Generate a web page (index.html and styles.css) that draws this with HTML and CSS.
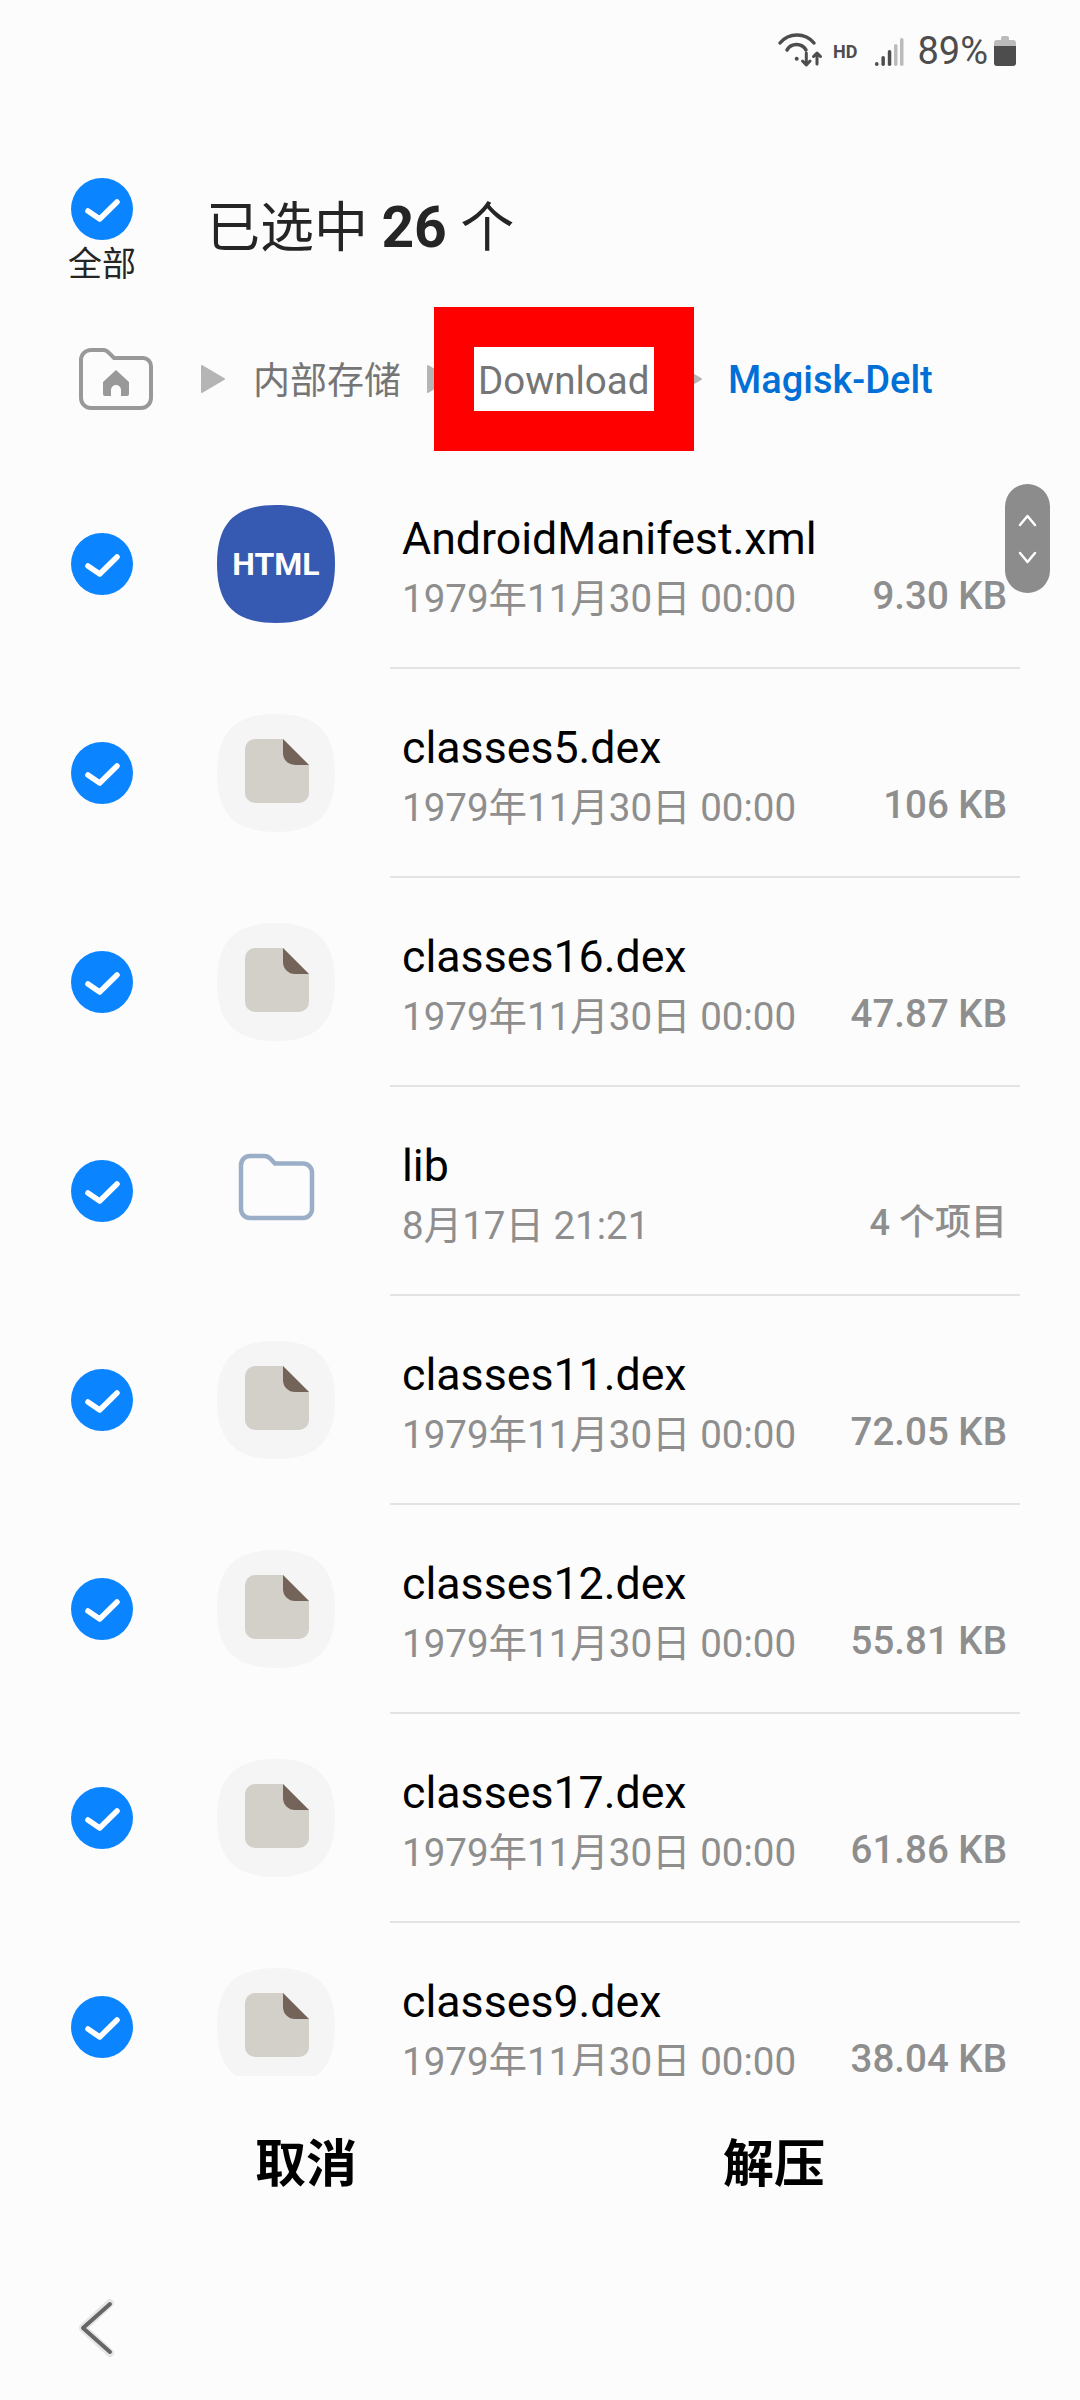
FILE: index.html
```html
<!DOCTYPE html>
<html lang="zh-CN">
<head>
  <meta charset="UTF-8">
  <title>已选中 26 个</title>
  <link rel="stylesheet" href="styles.css">
</head>
<body>
  <svg class="defs" width="0" height="0">
    <symbol id="check" viewBox="0 0 62 62">
      <circle cx="31" cy="31" r="31" fill="#0a84ff"/>
      <path d="M17 33 L28.7 41 L46 24" fill="none" stroke="#fff" stroke-width="5.5" stroke-linecap="round" stroke-linejoin="round"/>
    </symbol>
    <symbol id="doc" viewBox="0 0 118 118">
      <path d="M59 0C100 0 118 18 118 59C118 100 100 118 59 118C18 118 0 100 0 59C0 18 18 0 59 0Z" fill="#f5f5f5"/>
      <path d="M38 25H66L92 51V79a10 10 0 0 1-10 10H38a10 10 0 0 1-10-10V35a10 10 0 0 1 10-10Z" fill="#d3cfc9"/>
      <path d="M66 25L92 51H78a12 12 0 0 1-12-12Z" fill="#736359"/>
    </symbol>
  </svg>

  <div class="screen">
    <div class="status">
      <svg class="wifi" viewBox="0 0 46 36" width="46" height="36">
        <g fill="none" stroke="#4d4d4d" stroke-width="3.5" stroke-linecap="round" stroke-linejoin="round">
          <path d="M3 10A22 22 0 0 1 37 10"/>
          <path d="M10 17A11 11 0 0 1 29 17"/>
        </g>
        <g fill="none" stroke="#4d4d4d" stroke-width="3" stroke-linecap="round" stroke-linejoin="round">
          <path d="M29.300 20V32M25.500 28L29.300 32L33 28"/>
          <path d="M40 20V31M36.500 23.500L40 20L43.500 23.500"/>
        </g>
        <circle cx="19.700" cy="25.700" r="2" fill="#4d4d4d"/>
      </svg>
      <span class="hd">HD</span>
      <svg class="signal" viewBox="0 0 30 30" width="30" height="30">
        <rect x="0" y="25" width="3.5" height="4" rx="1.7" fill="#4d4d4d"/>
        <rect x="6.4" y="19" width="3.5" height="10" rx="1.7" fill="#4d4d4d"/>
        <rect x="12.8" y="13" width="3.5" height="16" rx="1.7" fill="#4d4d4d"/>
        <rect x="19" y="7" width="3.5" height="22" rx="1.7" fill="#bbb"/>
        <rect x="25" y="1" width="3.5" height="28" rx="1.7" fill="#bbb"/>
      </svg>
      <span class="battery-text">89%</span>
      <svg class="battery" viewBox="0 0 22 32" width="22" height="32">
        <path d="M7 3a2 2 0 0 1 2-2h4a2 2 0 0 1 2 2v2h4a3 3 0 0 1 3 3v4H0V8a3 3 0 0 1 3-3h4Z" fill="#bbb"/>
        <path d="M0 11H22V28a3 3 0 0 1-3 3H3a3 3 0 0 1-3-3Z" fill="#4d4d4d"/>
      </svg>
    </div>

    <div class="header">
      <div class="select-all">
        <svg class="check"><use href="#check"/></svg>
        <span>全部</span>
      </div>
      <h1 class="title">已选中 <b>26</b> 个</h1>
    </div>

    <div class="crumbs">
      <svg class="home" viewBox="0 0 74 62" width="74" height="62">
        <path d="M12 2H24a8 8 0 0 1 6 3L35 10H64a8 8 0 0 1 8 8V50a10 10 0 0 1-10 10H12A10 10 0 0 1 2 50V12A10 10 0 0 1 12 2Z" fill="none" stroke="#999" stroke-width="4"/>
        <path d="M37 22L50 34V46a2 2 0 0 1-2 2H42V42a5 5 0 0 0-10 0V48H26a2 2 0 0 1-2-2V34Z" fill="#999"/>
      </svg>
      <svg class="arrow" viewBox="0 0 24 30" width="24" height="30"><path d="M1 2L23 15L1 28Z" fill="#b5b5b5" stroke="#b5b5b5" stroke-width="2" stroke-linejoin="round"/></svg>
      <span class="crumb">内部存储</span>
      <svg class="arrow" viewBox="0 0 24 30" width="24" height="30"><path d="M1 2L23 15L1 28Z" fill="#b5b5b5" stroke="#b5b5b5" stroke-width="2" stroke-linejoin="round"/></svg>
      <span class="crumb marked">Download</span>
      <svg class="arrow" viewBox="0 0 24 30" width="24" height="30"><path d="M1 2L23 15L1 28Z" fill="#b5b5b5" stroke="#b5b5b5" stroke-width="2" stroke-linejoin="round"/></svg>
      <span class="crumb current">Magisk-Delta</span>
    </div>

    <div class="list">
      <div class="row">
        <svg class="check"><use href="#check"/></svg>
        <div class="icon icon-html">
          <svg viewBox="0 0 118 118" width="118" height="118"><path d="M59 0C100 0 118 18 118 59C118 100 100 118 59 118C18 118 0 100 0 59C0 18 18 0 59 0Z" fill="#3659b2"/></svg>
          <span>HTML</span>
        </div>
        <div class="info">
          <div class="name">AndroidManifest.xml</div>
          <div class="meta"><span class="date">1979年11月30日 00:00</span><span class="size">9.30 KB</span></div>
        </div>
      </div>
      <div class="row">
        <svg class="check"><use href="#check"/></svg>
        <div class="icon"><svg width="118" height="118"><use href="#doc"/></svg></div>
        <div class="info">
          <div class="name">classes5.dex</div>
          <div class="meta"><span class="date">1979年11月30日 00:00</span><span class="size">106 KB</span></div>
        </div>
      </div>
      <div class="row">
        <svg class="check"><use href="#check"/></svg>
        <div class="icon"><svg width="118" height="118"><use href="#doc"/></svg></div>
        <div class="info">
          <div class="name">classes16.dex</div>
          <div class="meta"><span class="date">1979年11月30日 00:00</span><span class="size">47.87 KB</span></div>
        </div>
      </div>
      <div class="row">
        <svg class="check"><use href="#check"/></svg>
        <div class="icon">
          <svg viewBox="0 0 118 118" width="118" height="118">
            <path d="M33 24H47a9 9 0 0 1 6.500 2.700L58 31.500H86a9 9 0 0 1 9 9V77a9 9 0 0 1-9 9H33a9 9 0 0 1-9-9V33a9 9 0 0 1 9-9Z" fill="none" stroke="#9aaec8" stroke-width="4.500"/>
          </svg>
        </div>
        <div class="info">
          <div class="name">lib</div>
          <div class="meta"><span class="date">8月17日 21:21</span><span class="size count">4 个项目</span></div>
        </div>
      </div>
      <div class="row">
        <svg class="check"><use href="#check"/></svg>
        <div class="icon"><svg width="118" height="118"><use href="#doc"/></svg></div>
        <div class="info">
          <div class="name">classes11.dex</div>
          <div class="meta"><span class="date">1979年11月30日 00:00</span><span class="size">72.05 KB</span></div>
        </div>
      </div>
      <div class="row">
        <svg class="check"><use href="#check"/></svg>
        <div class="icon"><svg width="118" height="118"><use href="#doc"/></svg></div>
        <div class="info">
          <div class="name">classes12.dex</div>
          <div class="meta"><span class="date">1979年11月30日 00:00</span><span class="size">55.81 KB</span></div>
        </div>
      </div>
      <div class="row">
        <svg class="check"><use href="#check"/></svg>
        <div class="icon"><svg width="118" height="118"><use href="#doc"/></svg></div>
        <div class="info">
          <div class="name">classes17.dex</div>
          <div class="meta"><span class="date">1979年11月30日 00:00</span><span class="size">61.86 KB</span></div>
        </div>
      </div>
      <div class="row">
        <svg class="check"><use href="#check"/></svg>
        <div class="icon"><svg width="118" height="118"><use href="#doc"/></svg></div>
        <div class="info">
          <div class="name">classes9.dex</div>
          <div class="meta"><span class="date">1979年11月30日 00:00</span><span class="size">38.04 KB</span></div>
        </div>
      </div>

      <!-- fast scroll handle, sits over the first row -->
      <div class="scroll-handle">
        <svg viewBox="0 0 45 109" width="45" height="109">
          <path d="M15 41L22.500 32L30 41M15 69L22.500 78L30 69" fill="none" stroke="#fff" stroke-width="2.500" stroke-linecap="round" stroke-linejoin="round"/>
        </svg>
      </div>
    </div>

    <div class="actions">
      <button type="button">取消</button>
      <button type="button">解压</button>
    </div>

    <div class="nav">
      <svg viewBox="0 0 50 70" width="50" height="70">
        <path d="M36 8L9 33L36 58" fill="none" stroke="#e6e6e6" stroke-width="8" stroke-linecap="round" stroke-linejoin="round"/>
        <path d="M36 9L9 33L36 57" fill="none" stroke="#666" stroke-width="4" stroke-linecap="round" stroke-linejoin="round"/>
      </svg>
    </div>
  </div>
</body>
</html>
```

FILE: styles.css
```css
body {
  margin: 0;
  background-color: #fcfcfc;
  font-family: Roboto, "Noto Sans CJK SC", sans-serif;
}
.defs {
  position: absolute;
}
.screen {
  width: 1080px;
  height: 2400px;
  overflow: hidden;
}

/* Status bar */
.status {
  display: flex;
  align-items: center;
  justify-content: flex-end;
  height: 102px;
  padding-right: 64px;
  color: #4d4d4d;
}
.hd {
  margin-left: 10px;
  font-size: 18px;
  font-weight: 700;
}
.signal {
  margin-left: 18px;
  margin-top: 2px;
}
.battery-text {
  margin-left: 12px;
  font-size: 38px;
}
.battery {
  margin-left: 6px;
}

/* Selection header */
.header {
  display: flex;
  align-items: flex-start;
  height: 200px;
  padding-left: 66px;
}
.select-all {
  display: flex;
  flex-direction: column;
  align-items: center;
  width: 72px;
  padding-top: 76px;
  font-size: 34px;
  line-height: 48px;
  color: #252525;
}
.check {
  flex: none;
  width: 62px;
  height: 62px;
}
.title {
  margin: 94px 0 0 68px;
  font-size: 54px;
  font-weight: 400;
  line-height: 64px;
  color: #252525;
}
.title b {
  font-size: 57px;
}

/* Breadcrumbs */
.crumbs {
  display: flex;
  align-items: center;
  width: 933px;
  height: 163px;
  margin-top: -5px;
  padding-left: 79px;
  box-sizing: border-box;
  overflow: hidden;
}
.arrow {
  flex: none;
}
.home {
  flex: none;
  margin-right: 48px;
}
.crumb {
  flex: none;
  margin: -2px 26px 0 28px;
  font-size: 37px;
  color: #757575;
}
.marked {
  position: relative;
  box-sizing: border-box;
  width: 260px;
  height: 144px;
  margin: 0 -16px 0 -17px;
  padding-left: 4px;
  border: 40px solid #f00;
  background-color: #fff;
  line-height: 67px;
  font-size: 38.5px;
}
.current {
  margin: 3px 0 0 26px;
  font-size: 38px;
  font-weight: 500;
  color: #0070d6;
}

/* File list */
.list {
  position: relative;
  height: 1616px;
  overflow: hidden;
}
.row {
  display: flex;
  align-items: center;
  box-sizing: border-box;
  height: 209px;
  padding: 0 0 2px 71px;
}
.icon {
  position: relative;
  flex: none;
  width: 118px;
  height: 118px;
  margin: 0 55px 0 84px;
}
.icon svg {
  display: block;
}
.icon-html span {
  position: absolute;
  inset: 0;
  display: flex;
  align-items: center;
  justify-content: center;
  font-size: 32px;
  font-weight: 700;
  color: #fff;
}
.info {
  flex: none;
  align-self: flex-start;
  box-sizing: border-box;
  width: 630px;
  height: 209px;
  padding: 51px 13px 0 12px;
  border-bottom: 2px solid #e3e3e3;
}
.name {
  font-size: 44.7px;
  line-height: 56px;
  color: #000;
}
.meta {
  display: flex;
  justify-content: space-between;
  margin-top: 7px;
  line-height: 50px;
}
.date {
  font-size: 38.5px;
  color: #8e8e8e;
}
.size {
  margin-top: -3px;
  font-size: 38.5px;
  font-weight: 500;
  color: #8e8e8e;
}
.count {
  font-size: 36px;
}
.scroll-handle {
  position: absolute;
  top: 24px;
  left: 1005px;
  width: 45px;
  height: 109px;
  border-radius: 23px;
  background-color: #8c8c8c;
}

/* Bottom buttons */
.actions {
  display: flex;
  height: 168px;
  padding: 0 72px;
}
.actions button {
  flex: 1;
  border: none;
  background: none;
  padding: 0;
  font-family: inherit;
  font-size: 51px;
  font-weight: 700;
  color: #000;
}
.nav {
  padding: 51px 0 0 74px;
}
.nav svg {
  display: block;
}
```
